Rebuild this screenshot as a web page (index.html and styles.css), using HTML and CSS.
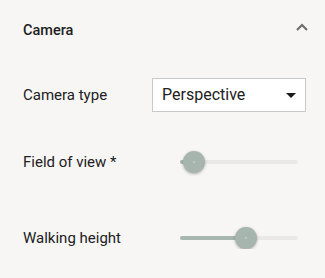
FILE: index.html
```html
<!DOCTYPE html>
<html lang="en">
<head>
    <meta charset="utf-8">
    <title>Camera</title>
    <link rel="stylesheet" href="styles.css">
</head>
<body>
    <div class="panel">
        <div class="panel-header">
            <h2 class="panel-title">Camera</h2>
            <svg class="collapse-icon" width="14" height="10" viewBox="0 0 14 10">
                <path d="M2 8 L7 3 L12 8" fill="none" stroke="#6b6b6b" stroke-width="2"/>
            </svg>
        </div>
        <div class="field field-select">
            <label class="field-label">Camera type</label>
            <div class="select">
                <span class="select-value">Perspective</span>
                <span class="select-arrow"></span>
            </div>
        </div>
        <div class="field field-fov">
            <label class="field-label">Field of view *</label>
            <div class="slider">
                <div class="slider-track"></div>
                <div class="slider-fill" style="width: 14px"></div>
                <div class="slider-thumb" style="left: 14px"></div>
            </div>
        </div>
        <div class="field field-walk">
            <label class="field-label">Walking height</label>
            <div class="slider">
                <div class="slider-track"></div>
                <div class="slider-fill" style="width: 66px"></div>
                <div class="slider-thumb" style="left: 66px"></div>
            </div>
        </div>
    </div>
</body>
</html>
```

FILE: styles.css
```css
* {
    margin: 0;
    padding: 0;
    box-sizing: border-box;
}

body {
    background: #f7f6f5;
    color: #212121;
    font-family: Roboto, 'Noto Sans', sans-serif;
}

.panel {
    padding: 21px 19px 0 23px;
}

.panel-header {
    display: flex;
    align-items: center;
    justify-content: space-between;
    height: 20px;
}

.panel-title {
    font-size: 14.5px;
    font-weight: 500;
    line-height: 20px;
}

.collapse-icon {
    margin-right: -3px;
    margin-top: -8px;
}

.field {
    display: grid;
    grid-template-columns: 129px 1fr;
    align-items: center;
}

.field-select {
    margin-top: 37px;
}

.field-fov {
    margin-top: 39px;
}

.field-walk {
    margin-top: 54px;
}

.field-label {
    font-size: 15px;
    line-height: 20px;
}

.select {
    display: flex;
    align-items: center;
    justify-content: space-between;
    height: 34px;
    background: #fff;
    border: 1px solid #c9c9c9;
    padding: 0 9px 0 9px;
}

.select-value {
    font-size: 16px;
    line-height: 20px;
}

.select-arrow {
    width: 0;
    height: 0;
    border-left: 5px solid transparent;
    border-right: 5px solid transparent;
    border-top: 5px solid #1a1a1a;
}

.slider {
    position: relative;
    height: 22px;
    margin: 0 8px 0 28px;
}

.slider-track {
    position: absolute;
    left: 0;
    right: 0;
    top: 9px;
    height: 4px;
    border-radius: 2px;
    background: #ebe9e7;
}

.slider-fill {
    position: absolute;
    left: 0;
    top: 9px;
    height: 4px;
    border-radius: 2px;
    background: #a8b7b0;
}

.slider-thumb {
    position: absolute;
    top: 0;
    width: 22px;
    height: 22px;
    margin-left: -11px;
    border-radius: 50%;
    background: #a6b5ae;
    box-shadow: 0 1px 3px rgba(0, 0, 0, 0.3);
}

.slider-thumb::after {
    content: '';
    position: absolute;
    left: 10px;
    top: 10px;
    width: 2px;
    height: 2px;
    border-radius: 50%;
    background: #c3ccc8;
}
```
